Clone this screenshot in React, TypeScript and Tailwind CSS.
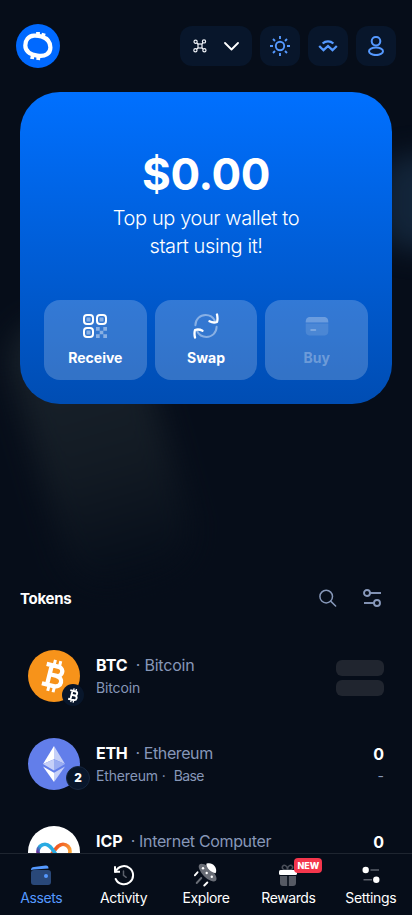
import React from "react";

function Logo() {
  return (
    <svg width="44" height="44" viewBox="0 0 44 44" fill="none">
      <circle cx="22" cy="22" r="22" fill="#0069FF" />
      <path d="M18 11.600C12.500 12 9.300 16 9.300 21.500c0 5.500 4.200 8.800 12 10.100C29.500 33 34.400 29.500 34.400 23.500c0-6.500-4-9.500-8.900-11-2.300-.7-5-1.100-7.500-.9Z" stroke="#fff" strokeWidth="4.200" />
      <path d="M22 8v4M27.800 9.300l-1 4M16.800 31l-.8 4M22.600 32l-.5 4" stroke="#fff" strokeWidth="3.800" />
    </svg>
  );
}

function Network() {
  return (
    <svg width="14" height="14" viewBox="0 0 14 14" fill="none" stroke="#F2F5FA" strokeWidth="1.200">
      <rect x="5" y="5" width="4" height="4" />
      <circle cx="2.600" cy="2.800" r="1.600" /><circle cx="11" cy="2.400" r="1.600" />
      <circle cx="2.400" cy="11.200" r="1.600" /><circle cx="11.400" cy="11.300" r="1.600" />
      <path d="m3.800 4 1.400 1.300M9 5l1-1.300M5 9 3.600 10.200M9 9l1.200 1.200" />
    </svg>
  );
}

function Sun() {
  return (
    <svg width="20" height="20" viewBox="0 0 20 20" fill="none" stroke="#5599FF" strokeWidth="1.900">
      <circle cx="10" cy="10" r="4.200" />
      <path d="M10 0v3M10 17v3M0 10h3M17 10h3M3 3l2 2M15 15l2 2M3 17l2-2M15 5l2-2" />
    </svg>
  );
}

function WalletConnect() {
  return (
    <svg width="20" height="14" viewBox="0 0 20 14" fill="none" stroke="#5599FF" strokeWidth="2.300">
      <path d="M4.600 4.500C7.700 1.600 12.300 1.600 15.400 4.500" />
      <path d="m1.200 7 4.300 4.200L10 7l4.500 4.200L18.800 7" />
    </svg>
  );
}

function User() {
  return (
    <svg width="16" height="20" viewBox="0 0 16 20" fill="none" stroke="#5599FF" strokeWidth="2">
      <rect x="3.700" y="1" width="8.600" height="8.400" rx="4.100" />
      <ellipse cx="8" cy="15.300" rx="7" ry="3.800" />
    </svg>
  );
}

function Qr() {
  return (
    <svg width="24" height="24" viewBox="0 0 24 24" fill="none">
      <g stroke="#fff" strokeWidth="2">
        <rect x="1" y="1" width="9" height="9" rx="3" />
        <rect x="14" y="1" width="9" height="9" rx="3" />
        <rect x="1" y="14" width="9" height="9" rx="3" />
      </g>
      <g fill="#fff" fillOpacity=".42">
        <rect x="3.500" y="3.500" width="4" height="4" rx=".6" />
        <rect x="16.500" y="3.500" width="4" height="4" rx=".6" />
        <rect x="3.500" y="16.500" width="4" height="4" rx=".6" />
        <path d="M13 13h3.700v3.700H13zM20.300 13H24v3.700h-3.700zM16.700 16.700h3.600v3.600h-3.600zM13 20.300h3.700V24H13zM20.300 20.300H24V24h-3.700z" />
      </g>
    </svg>
  );
}

function Swap() {
  return (
    <svg width="26" height="26" viewBox="0 0 26 26" fill="none" strokeLinecap="round" strokeLinejoin="round">
      <g stroke="#fff" strokeOpacity=".42" strokeWidth="2">
        <path d="M2.400 12.200C2.400 6.200 7 2 12.600 2c4.300 0 7.500 2.200 9.300 5.700" />
        <path d="M23.600 13.800c0 6-4.600 10.200-10.200 10.200-4.300 0-7.500-2.200-9.300-5.700" />
      </g>
      <g stroke="#fff" strokeWidth="2.300">
        <path d="M24 1.500c.7 3 .6 5.600 0 7.500-2.400.8-5 .6-7.500-.7" />
        <path d="M2 24.500c-.7-3-.6-5.600 0-7.500 2.400-.8 5-.6 7.500.7" />
      </g>
    </svg>
  );
}

function Card() {
  return (
    <svg width="24" height="20" viewBox="0 0 24 20" fill="none">
      <path d="M.7 6.600C.7 2.300 2.100 1 5.500 1h13c3.400 0 4.800 1.300 4.800 5.600Z" fill="#fff" fillOpacity=".28" />
      <path d="M.7 7.600h22.600v7.200c0 3.400-1.400 4.700-4.800 4.700h-13c-3.400 0-4.800-1.300-4.800-4.700Z" fill="#fff" fillOpacity=".12" />
      <path d="M6 14h4.500" stroke="#fff" strokeOpacity=".35" strokeWidth="1.500" strokeLinecap="round" />
    </svg>
  );
}

function BitcoinMark({ className }: { className: string }) {
  return (
    <svg className={className} viewBox="0 0 28 34" fill="none" stroke="#fff">
      <g transform="rotate(14 14 17)">
        <path d="M4 7h12.500c6 0 6 9.300 0 9.300H9.500M16 16.300c8.500 0 8.500 10.700 0 10.700H4M9.300 7v20" strokeWidth="4.300" />
        <path d="M11.500 1V7M17 1V7M11.500 27v6M17 27v6" strokeWidth="3" />
      </g>
    </svg>
  );
}

function EthMark() {
  return (
    <svg width="22" height="36" viewBox="0 0 22 36">
      <path d="M11 0 0 18l11-4.700z" fill="#fff" /><path d="m11 0 11 18-11-4.700z" fill="#C6D0F8" />
      <path d="M0 18l11-4.700V24.500z" fill="#C6D0F8" /><path d="m22 18-11-4.700V24.500z" fill="#9AADF2" />
      <path d="m0 20.500 11 6.300V36z" fill="#fff" /><path d="m22 20.500-11 6.300V36z" fill="#C6D0F8" />
    </svg>
  );
}

function IcpMark() {
  return (
    <svg width="36" height="20" viewBox="0 0 36 20" fill="none" strokeWidth="3.600">
      <defs>
        <linearGradient id="icpWarm" x1="18" y1="2" x2="34" y2="14" gradientUnits="userSpaceOnUse"><stop offset=".2" stopColor="#F15A24" /><stop offset="1" stopColor="#FBB03B" /></linearGradient>
        <linearGradient id="icpCool" x1="1" y1="14" x2="12" y2="4" gradientUnits="userSpaceOnUse"><stop offset=".15" stopColor="#6A2390" /><stop offset=".6" stopColor="#29ABE2" /></linearGradient>
      </defs>
      <path d="M15 13c4-4.500 6.500-10.700 12-10.700 4 0 7 3.200 7 7s-3 7.500-7 7.500c-3 0-5.500-2-8-4.500" stroke="url(#icpWarm)" />
      <path d="M21 14C16.500 8 14.500 2.300 9 2.300c-4 0-7 3.200-7 7s3 7.500 7 7.500c2.500 0 4-1.500 5-2.500" stroke="url(#icpCool)" />
    </svg>
  );
}

function Search() {
  return (
    <svg width="18" height="18" viewBox="0 0 18 18" fill="none" stroke="#8697B8" strokeWidth="1.500" strokeLinecap="round">
      <circle cx="7.200" cy="7.600" r="6.300" /><path d="m11.700 12.100 4.900 4.900" />
    </svg>
  );
}

function Filters() {
  return (
    <svg width="18" height="18" viewBox="0 0 18 18" fill="none" stroke="#8899BB" strokeWidth="1.900">
      <circle cx="4" cy="4" r="3" /><path d="M7 4h11" /><circle cx="14" cy="14" r="3" /><path d="M11 14H1" />
    </svg>
  );
}

function WalletIcon() {
  return (
    <svg width="22" height="22" viewBox="0 0 22 22">
      <rect x="1" y="6" width="20" height="15" rx="3" fill="#294879" />
      <path d="M1 6.300C1 3.800 2.200 3.200 4 3L15.500 1.500c2-.2 3 .6 3 2.900L4 5.600C2.700 5.700 1.800 5.900 1 6.300Z" fill="#5599FF" />
      <circle cx="16" cy="12" r="2" fill="#5599FF" />
    </svg>
  );
}

function ActivityIcon() {
  return (
    <svg width="22" height="22" viewBox="0 0 22 22" fill="none" strokeLinecap="round">
      <path d="M2.600 7.700A9.100 9.100 0 1 1 2.700 15" stroke="#fff" strokeWidth="2" />
      <path d="M2 2.300v5.400h5" stroke="#fff" strokeWidth="2" strokeLinecap="butt" />
      <path d="M10.500 7v4.300l2.700 2" stroke="#5B606B" strokeWidth="1.500" />
    </svg>
  );
}

function UfoIcon() {
  return (
    <svg width="24" height="24" viewBox="0 0 24 24" fill="none">
      <ellipse cx="13.600" cy="9.600" rx="11.500" ry="5" transform="rotate(45 13.600 9.600)" fill="#696D76" />
      <path d="M12.300.8c3.300-1.100 6.300-.2 8.200 2.300 1.800 2.300 2.200 5 1.100 7.100C17.500 9.600 12.500 5.500 12.300.8Z" fill="#fff" />
      <circle cx="9" cy="5.200" r="1.200" fill="#fff" /><circle cx="12.700" cy="10" r="1.200" fill="#fff" /><circle cx="17.800" cy="13.700" r="1.200" fill="#fff" />
      <path d="M3.500 9.300.8 12.300M13.300 19.500l-3 3" stroke="#fff" strokeWidth="1.900" strokeLinecap="round" />
      <path d="m7.300 15-4.600 5" stroke="#696D76" strokeWidth="1.900" strokeLinecap="round" />
    </svg>
  );
}

function GiftIcon() {
  return (
    <svg width="20" height="22" viewBox="0 0 20 22" fill="none">
      <path d="M9.500 6C5 6.500 3.500 4 4.700 2.300 6 .5 9.500 1.300 9.500 6Zm0 0c4.500.5 6-2 4.800-3.700C13 .5 9.500 1.300 9.500 6Z" stroke="#4B505A" strokeWidth="1.500" />
      <rect x="1" y="6" width="18" height="5" rx="1.500" fill="#fff" />
      <path d="M2 12h7.200v10H5c-2 0-3-1-3-3ZM10.800 12H18v7c0 2-1 3-3 3h-4.200Z" fill="#565A64" />
    </svg>
  );
}

function SettingsIcon() {
  return (
    <svg width="18" height="18" viewBox="0 0 18 18" fill="none">
      <circle cx="3.700" cy="4" r="3.200" fill="#fff" /><circle cx="14.300" cy="13.700" r="3.200" fill="#fff" />
      <path d="M8.500 4H17M1.500 13.700H10" stroke="#5B606B" strokeWidth="1.500" />
    </svg>
  );
}

type TokenProps = { icon: React.ReactNode; symbol: React.ReactNode; name: React.ReactNode; chain?: React.ReactNode; right: React.ReactNode };

function TokenRow({ icon, symbol, name, chain, right }: TokenProps) {
  return (
    <div className="flex h-[88px] shrink-0 items-start pt-[18px] pr-7 pl-7">
      {icon}
      <div className="ml-4 flex-1">
        <div className="mt-[3px] mb-px flex h-6 items-center text-[16px] leading-6 whitespace-pre">{symbol}{name}</div>
        <div className="flex h-5 items-center text-[14px] leading-5 tracking-[-0.15px] text-[#8697B8] whitespace-pre">{chain}</div>
      </div>
      <div className="flex w-12 flex-col items-end">{right}</div>
    </div>
  );
}

function NavItem({ icon, label, className }: { icon: React.ReactNode; label: string; className: string }) {
  return (
    <div className="flex flex-1 flex-col items-center pt-[9px]">
      <div className="relative flex h-6 items-center justify-center">{icon}</div>
      <span className={"text-[14px] leading-[21px] whitespace-nowrap " + className}>{label}</span>
    </div>
  );
}

function Action({ icon, label, className }: { icon: React.ReactNode; label: string; className: string }) {
  return (
    <div className="flex h-20 flex-1 flex-col items-center rounded-[16px] bg-white/20 pt-3">
      <div className="flex h-[28px] items-center">{icon}</div>
      <span className={"mt-2 text-[14px] leading-5 font-bold " + className}>{label}</span>
    </div>
  );
}

export default function App() {
  return (
    <div className="relative flex h-[915px] w-[412px] flex-col overflow-hidden bg-[#060D19] font-['Inter','Liberation_Sans',sans-serif] text-white">
      <div className="absolute top-[310px] left-[36px] h-[275px] w-[130px] -rotate-16 rounded-[40px] bg-linear-to-b from-[#1A242D] via-[#131B24] via-55% to-[#060D19] blur-[15px]" />
      <div className="absolute top-[155px] left-[380px] h-[95px] w-[80px] rounded-[30px] bg-[#162B42] opacity-80 blur-[14px]" />

      <header className="relative flex h-[92px] shrink-0 items-center pr-4 pl-4">
        <Logo />
        <div className="ml-auto flex gap-2">
          <div className="flex h-10 w-[72px] items-center rounded-[12px] bg-[#08162B] pl-[13px]">
            <Network />
            <svg className="ml-[17px]" width="15" height="9" viewBox="0 0 15 9" fill="none" stroke="#fff" strokeWidth="1.800" strokeLinecap="round" strokeLinejoin="round"><path d="m1 1 6.500 6.500L14 1" /></svg>
          </div>
          <div className="flex size-10 items-center justify-center rounded-[12px] bg-[#08162B]"><Sun /></div>
          <div className="flex size-10 items-center justify-center rounded-[12px] bg-[#08162B]"><WalletConnect /></div>
          <div className="flex size-10 items-center justify-center rounded-[12px] bg-[#08162B]"><User /></div>
        </div>
      </header>

      <section className="relative mx-5 flex h-[312px] shrink-0 flex-col items-center rounded-[40px] bg-linear-to-b from-[#0070FF] to-[#004DB3] px-6 pt-[56px]">
        <div className="h-[52px] text-[44px] leading-[52px] font-bold tracking-[-0.4px]">$0.00</div>
        <div className="mt-1 text-center text-[20px] leading-7 font-light tracking-[-0.4px]"><div>Top up your wallet to</div><div>start using it!</div></div>
        <div className="mt-10 flex w-full gap-2">
          <Action icon={<Qr />} label="Receive" className="" />
          <Action icon={<Swap />} label="Swap" className="" />
          <Action icon={<Card />} label="Buy" className="text-white/30" />
        </div>
      </section>

      <section className="relative flex min-h-0 flex-1 flex-col overflow-hidden pt-[178px]">
        <div className="flex h-8 shrink-0 items-center pr-[31px] pl-5">
          <h2 className="pt-px text-[15px] leading-6 font-bold tracking-[-0.3px]">Tokens</h2>
          <div className="ml-auto flex items-center gap-[26px]"><Search /><Filters /></div>
        </div>
        <div className="mt-[18px] flex flex-col">
          <TokenRow
            icon={<div className="relative flex size-[52px] items-center justify-center rounded-full bg-[#F7931A]"><BitcoinMark className="h-[34px] w-[28px]" />
              <div className="absolute top-[34px] left-[34px] flex size-[22px] items-center justify-center rounded-full bg-[#08162B]"><BitcoinMark className="h-[15px] w-[13px]" /></div></div>}
            symbol={<b>BTC</b>} name={<span className="ml-2 tracking-[-0.2px] text-[#8697B8]">· Bitcoin</span>} chain="Bitcoin"
            right={<div className="mt-[10px] flex flex-col gap-1"><div className="h-4 w-12 rounded-[6px] bg-[#20252F]" /><div className="h-4 w-12 rounded-[6px] bg-[#20252F]" /></div>}
          />
          <TokenRow
            icon={<div className="relative flex size-[52px] items-center justify-center rounded-full bg-[#627EEA]"><EthMark />
              <div className="absolute top-7 left-[38px] flex size-6 items-center justify-center rounded-full border border-[#17263D] bg-[#08162B] text-[12px] font-extrabold">2</div></div>}
            symbol={<b className="tracking-[-0.3px]">ETH</b>} name={<span className="ml-2 tracking-[-0.4px] text-[#8697B8]">· Ethereum</span>} chain={<><span>Ethereum ·</span><span className="ml-2 tracking-[-0.6px]">Base</span></>}
            right={<><b className="mt-[2px] h-6 text-[16px] leading-7">0</b><span className="text-[14px] leading-6 text-[#8697B8]">-</span></>}
          />
          <TokenRow
            icon={<div className="flex size-[52px] items-center justify-center rounded-full bg-white"><IcpMark /></div>}
            symbol={<b>ICP</b>} name={<span className="ml-2 tracking-[-0.35px] text-[#8697B8]">· Internet Computer</span>}
            right={<b className="mt-[2px] h-6 text-[16px] leading-7">0</b>}
          />
        </div>
      </section>

      <nav className="relative flex h-[62px] shrink-0 border-t border-[#1E2530] bg-[#060D19]">
        <NavItem icon={<WalletIcon />} label="Assets" className="tracking-[-0.4px] text-[#5599FF]" />
        <NavItem icon={<ActivityIcon />} label="Activity" className="tracking-[-0.3px]" />
        <NavItem icon={<UfoIcon />} label="Explore" className="tracking-[-0.4px]" />
        <NavItem icon={<><GiftIcon /><span className="absolute -top-[5px] left-4 flex h-[15px] w-7 items-center justify-center rounded-[4px] bg-[#F4364C] text-[9px] font-extrabold">NEW</span></>} label="Rewards" className="tracking-[-0.4px]" />
        <NavItem icon={<SettingsIcon />} label="Settings" className="tracking-[-0.3px]" />
      </nav>
    </div>
  );
}
